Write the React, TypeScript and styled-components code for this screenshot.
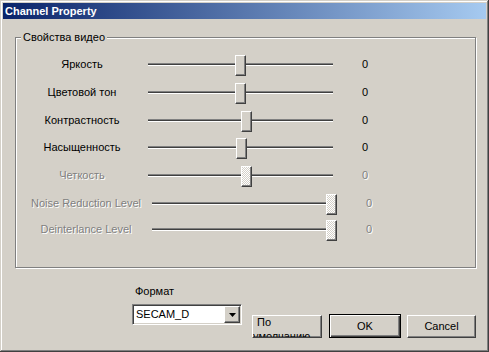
import React from "react";
import styled, { createGlobalStyle } from "styled-components";

const Global = createGlobalStyle`
  html, body { margin: 0; padding: 0; background: #D4D0C8; }
  body { font-family: "Liberation Sans", Arial, sans-serif; font-size: 11px; }
  * { box-sizing: border-box; }
`;

const FACE = "#D4D0C8";

const Window = styled.div`
  width: 489px;
  height: 352px;
  padding: 3px;
  background: ${FACE};
  box-shadow: inset -1px -1px 0 #404040, inset 1px 1px 0 ${FACE},
    inset -2px -2px 0 #808080, inset 2px 2px 0 #fff;
  display: flex;
  flex-direction: column;
`;

const TitleBar = styled.div`
  height: 16px;
  padding-left: 2px;
  background: linear-gradient(to right, #0a246a, #a6caf0);
  color: #fff;
  font-weight: bold;
  font-size: 11px;
  line-height: 16px;
  white-space: nowrap;
`;

const Content = styled.div`
  display: flex;
  flex-direction: column;
  padding: 18px 0 0 12px;
`;

const GroupBox = styled.div`
  position: relative;
  width: 461px;
  height: 231px;
  border: 1px solid #808080;
  box-shadow: 1px 1px 0 #fff, inset 1px 1px 0 #fff;
  padding-top: 12px;
  display: flex;
  flex-direction: column;
`;

const Legend = styled.span`
  position: absolute;
  top: -7px;
  left: 5px;
  padding: 0 2px;
  line-height: 13px;
  background: ${FACE};
  color: #000;
`;

const Row = styled.div<{ $h: number; $shift: number }>`
  display: flex;
  align-items: flex-start;
  height: ${(p) => p.$h}px;
  padding-left: ${(p) => 10 + p.$shift}px;
`;

const disabledText = `
  color: #808080;
  text-shadow: 1px 1px 0 #fff;
`;

const Label = styled.div<{ $disabled?: boolean }>`
  width: 112px;
  flex-shrink: 0;
  margin-top: 8px;
  text-align: center;
  line-height: 13px;
  white-space: nowrap;
  color: #000;
  ${(p) => (p.$disabled ? disabledText : "")}
`;

const Slider = styled.div`
  position: relative;
  width: 185px;
  height: 21px;
  margin-top: 5px;
  margin-left: 10px;
  flex-shrink: 0;
`;

const Track = styled.div`
  margin-top: 8px;
  height: 3px;
  background: #404040;
  border-top: 1px solid #808080;
  border-bottom: 1px solid #fff;
`;

const Thumb = styled.div<{ $disabled?: boolean }>`
  position: absolute;
  top: 0;
  width: 11px;
  height: 21px;
  border: 1px solid;
  border-color: #fff #404040 #404040 #fff;
  box-shadow: inset -1px -1px 0 #808080;
  background-color: ${FACE};
  ${(p) =>
    p.$disabled
      ? `background-image: repeating-conic-gradient(#fff 0% 25%, ${FACE} 0% 50%);
         background-size: 2px 2px;`
      : ""}
`;

const Value = styled.div<{ $disabled?: boolean }>`
  margin-left: 29px;
  margin-top: 8px;
  line-height: 13px;
  color: #000;
  ${(p) => (p.$disabled ? disabledText : "")}
`;

const BottomBar = styled.div`
  display: flex;
  align-items: flex-start;
  padding-left: 117px;
`;

const FormatCol = styled.div`
  display: flex;
  flex-direction: column;
  padding-top: 17px;
`;

const FormatLabel = styled.div`
  margin-left: 3px;
  line-height: 13px;
  color: #000;
`;

const Combo = styled.div`
  margin-top: 6px;
  width: 110px;
  height: 21px;
  border: 1px solid;
  border-color: #808080 #fff #fff #808080;
  box-shadow: inset 1px 1px 0 #404040, inset -1px -1px 0 ${FACE};
  background: #fff;
  padding: 1px;
  display: flex;
  align-items: center;
`;

const ComboText = styled.span`
  padding-left: 2px;
  color: #000;
  line-height: 13px;
  flex: 1;
`;

const ComboButton = styled.div`
  width: 16px;
  height: 17px;
  border: 1px solid;
  border-color: #fff #404040 #404040 #fff;
  box-shadow: inset -1px -1px 0 #808080;
  background: ${FACE};
  display: flex;
  align-items: center;
  justify-content: center;
`;

const ButtonRow = styled.div`
  display: flex;
  align-items: flex-start;
  margin-top: 46px;
  margin-left: 10px;
`;

const Button = styled.div<{ $w: number; $gap: number }>`
  width: ${(p) => p.$w}px;
  height: 23px;
  margin-top: 1px;
  margin-left: ${(p) => p.$gap}px;
  border: 1px solid;
  border-color: #fff #404040 #404040 #fff;
  box-shadow: inset -1px -1px 0 #808080;
  background: ${FACE};
  display: flex;
  align-items: center;
  justify-content: center;
  color: #000;
  line-height: 13px;
  overflow: hidden;
`;

const DefaultButton = styled.div<{ $w: number; $gap: number }>`
  width: ${(p) => p.$w}px;
  height: 24px;
  margin-left: ${(p) => p.$gap}px;
  border: 1px solid #000;
  box-shadow: inset 1px 1px 0 #fff, inset -1px -1px 0 #404040,
    inset -2px -2px 0 #808080;
  background: ${FACE};
  display: flex;
  align-items: center;
  justify-content: center;
  color: #000;
  line-height: 13px;
`;

const WrapButton = styled(Button)`
  align-items: flex-start;
  justify-content: flex-start;
`;

const WrapText = styled.div`
  margin-top: -1px;
  text-indent: 4px;
  width: 66px;
  line-height: 14px;
`;

type RowData = {
  label: string;
  pos: number;
  h: number;
  disabled?: boolean;
  shift?: number;
};

const rows: RowData[] = [
  { label: "Яркость", pos: 87, h: 28 },
  { label: "Цветовой тон", pos: 87, h: 28 },
  { label: "Контрастность", pos: 93, h: 27 },
  { label: "Насыщенность", pos: 88, h: 28 },
  { label: "Четкость", pos: 93, h: 28, disabled: true },
  { label: "Noise Reduction Level", pos: 174, h: 26, disabled: true, shift: 4 },
  { label: "Deinterlance Level", pos: 174, h: 26, disabled: true, shift: 4 },
];

export default function App() {
  return (
    <>
      <Global />
      <Window>
        <TitleBar>Channel Property</TitleBar>
        <Content>
          <GroupBox>
            <Legend>Свойства видео</Legend>
            {rows.map((r) => (
              <Row key={r.label} $h={r.h} $shift={r.shift ?? 0}>
                <Label $disabled={r.disabled}>{r.label}</Label>
                <Slider>
                  <Track />
                  <Thumb $disabled={r.disabled} style={{ left: r.pos }} />
                </Slider>
                <Value $disabled={r.disabled}>0</Value>
              </Row>
            ))}
          </GroupBox>
          <BottomBar>
            <FormatCol>
              <FormatLabel>Формат</FormatLabel>
              <Combo>
                <ComboText>SECAM_D</ComboText>
                <ComboButton>
                  <svg width="7" height="4" viewBox="0 0 7 4">
                    <polygon points="0,0 7,0 3.5,4" fill="#000" />
                  </svg>
                </ComboButton>
              </Combo>
            </FormatCol>
            <ButtonRow>
              <WrapButton $w={70} $gap={0}>
                <WrapText>По умолчанию</WrapText>
              </WrapButton>
              <DefaultButton $w={72} $gap={7}>OK</DefaultButton>
              <Button $w={69} $gap={6}>Cancel</Button>
            </ButtonRow>
          </BottomBar>
        </Content>
      </Window>
    </>
  );
}
